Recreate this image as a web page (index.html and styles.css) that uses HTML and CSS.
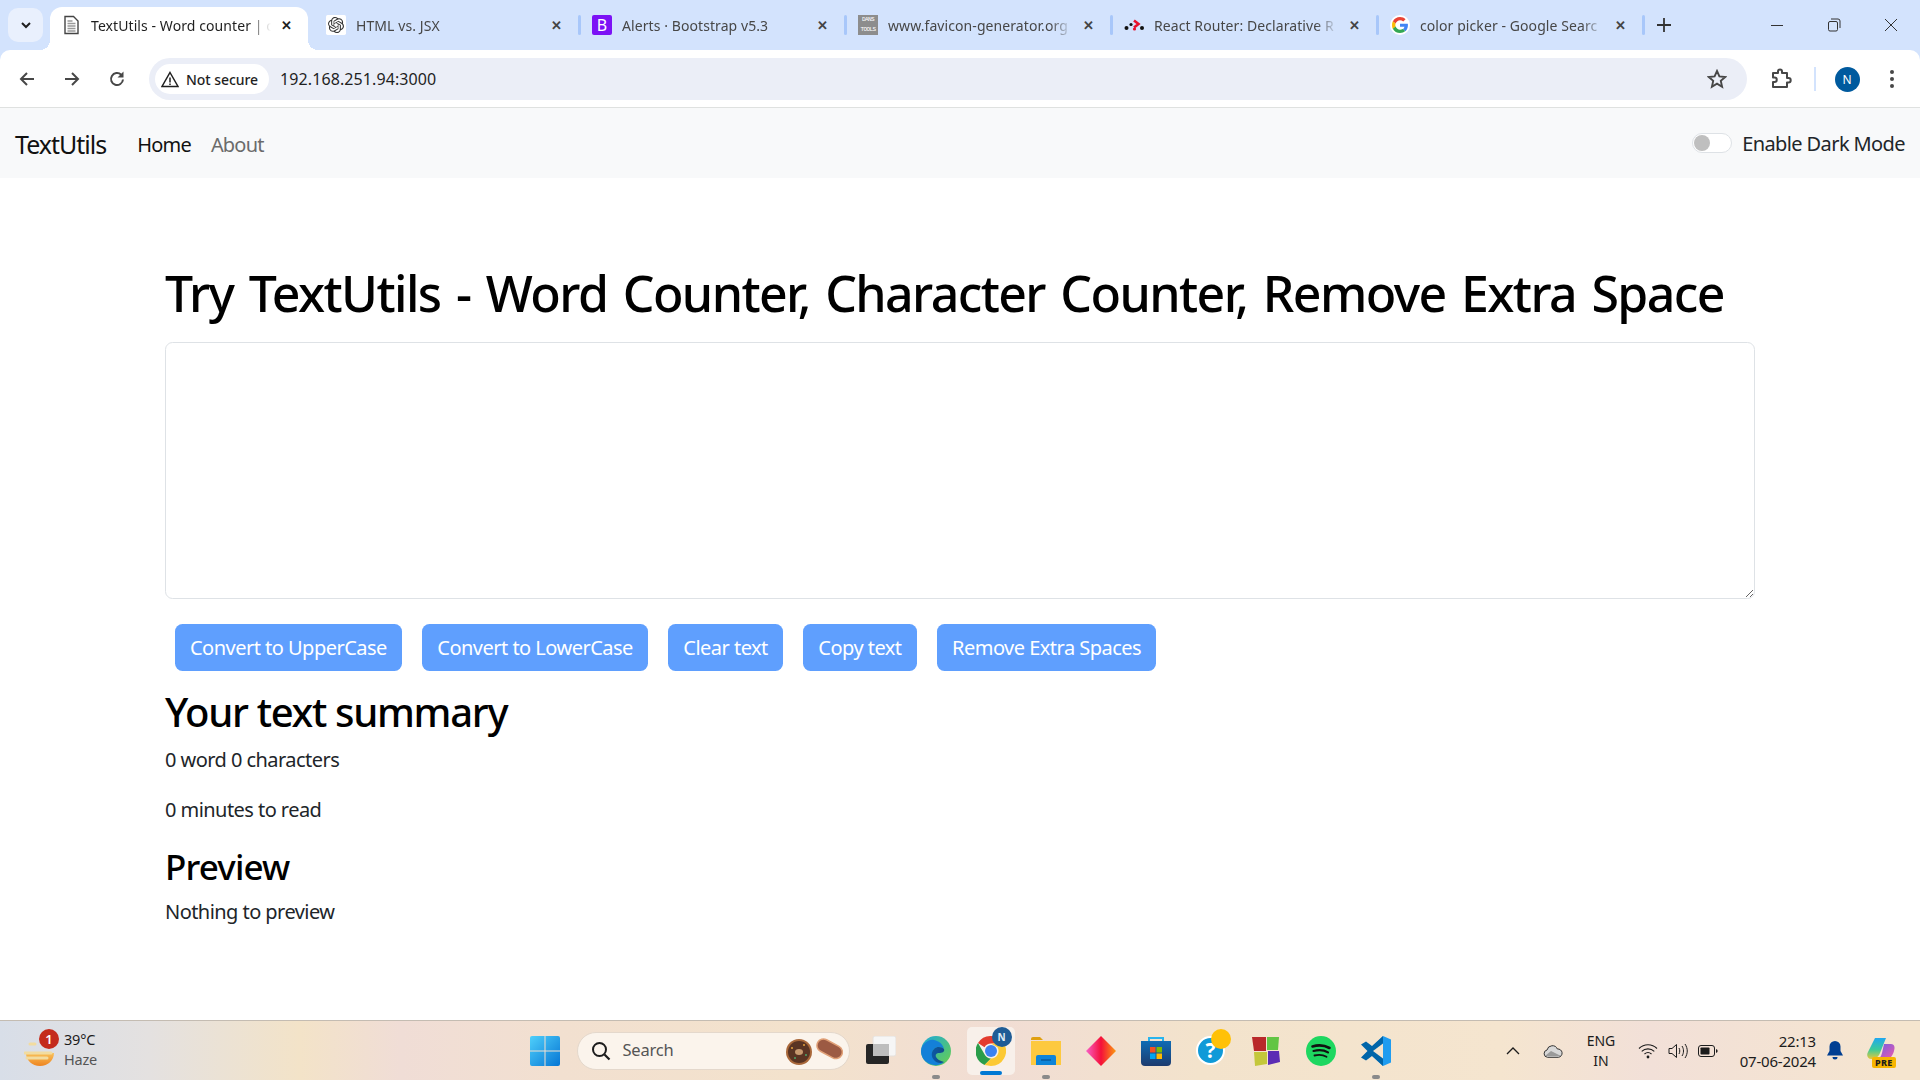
FILE: index.html
```html
<!DOCTYPE html>
<html lang="en">
<head>
<meta charset="utf-8">
<title>TextUtils</title>
<link rel="stylesheet" href="styles.css">
</head>
<body>
<header class="browser">
  <div class="tabstrip">
    <button class="tabsearch"><svg width="14" height="14" viewBox="0 0 14 14"><path d="M3 5l4 4 4-4" fill="none" stroke="#1f1f1f" stroke-width="2"/></svg></button>
    <div class="tab active">
      <svg class="fav" width="20" height="20" viewBox="0 0 20 20"><path d="M4 1.500h8.500L17 6v12.500H4z" fill="#fff" stroke="#444" stroke-width="1.400"/><path d="M6.500 6h5M6.500 8.500h8M6.500 11h8M6.500 13.500h8M6.500 16h8" stroke="#999" stroke-width="1.400"/></svg>
      <span class="tabtitle">TextUtils - Word counter | c</span>
      <span class="tabx">✕</span>
    </div>
    <div class="tab">
      <svg class="fav" width="20" height="20" viewBox="0 0 24 24"><rect width="24" height="24" rx="2" fill="#fff"/><path transform="translate(2.400 2.400) scale(.8)" fill="#333" d="M22.2819 9.8211a5.9847 5.9847 0 0 0-.5157-4.9108 6.0462 6.0462 0 0 0-6.5098-2.9A6.0651 6.0651 0 0 0 4.9807 4.1818a5.9847 5.9847 0 0 0-3.9977 2.9 6.0462 6.0462 0 0 0 .7427 7.0966 5.98 5.98 0 0 0 .511 4.9107 6.051 6.051 0 0 0 6.5146 2.9001A5.9847 5.9847 0 0 0 13.2599 24a6.0557 6.0557 0 0 0 5.7718-4.2058 5.9894 5.9894 0 0 0 3.9977-2.9001 6.0557 6.0557 0 0 0-.7475-7.0729zm-9.022 12.6081a4.4755 4.4755 0 0 1-2.8764-1.0408l.1419-.0804 4.7783-2.7582a.7948.7948 0 0 0 .3927-.6813v-6.7369l2.02 1.1686a.071.071 0 0 1 .038.052v5.5826a4.504 4.504 0 0 1-4.4945 4.4944zm-9.6607-4.1254a4.4708 4.4708 0 0 1-.5346-3.0137l.142.0852 4.783 2.7582a.7712.7712 0 0 0 .7806 0l5.8428-3.3685v2.3324a.0804.0804 0 0 1-.0332.0615L9.74 19.9502a4.4992 4.4992 0 0 1-6.1408-1.6464zM2.3408 7.8956a4.485 4.485 0 0 1 2.3655-1.9728V11.6a.7664.7664 0 0 0 .3879.6765l5.8144 3.3543-2.0201 1.1685a.0757.0757 0 0 1-.071 0l-4.8303-2.7865A4.504 4.504 0 0 1 2.3408 7.872zm16.5963 3.8558L13.1038 8.364 15.1192 7.2a.0757.0757 0 0 1 .071 0l4.8303 2.7913a4.4944 4.4944 0 0 1-.6765 8.1042v-5.6772a.79.79 0 0 0-.407-.667zm2.0107-3.0231l-.142-.0852-4.7735-2.7818a.7759.7759 0 0 0-.7854 0L9.409 9.2297V6.8974a.0662.0662 0 0 1 .0284-.0615l4.8303-2.7866a4.4992 4.4992 0 0 1 6.6802 4.66zM8.3065 12.863l-2.02-1.1638a.0804.0804 0 0 1-.038-.0567V6.0742a4.4992 4.4992 0 0 1 7.3757-3.4537l-.142.0805L8.704 5.459a.7948.7948 0 0 0-.3927.6813zm1.0976-2.3654l2.602-1.4998 2.6069 1.4998v2.9994l-2.5974 1.4997-2.6067-1.4997Z"/></svg>
      <span class="tabtitle">HTML vs. JSX</span>
      <span class="tabx">✕</span>
    </div>
    <div class="tab sep">
      <span class="fav bs">B</span>
      <span class="tabtitle">Alerts · Bootstrap v5.3</span>
      <span class="tabx">✕</span>
    </div>
    <div class="tab sep">
      <span class="fav dans"><span>DANS</span><span>TOOLS</span></span>
      <span class="tabtitle">www.favicon-generator.org</span>
      <span class="tabx">✕</span>
    </div>
    <div class="tab sep">
      <svg class="fav" width="20" height="20" viewBox="0 0 20 20"><circle cx="2.500" cy="13" r="2" fill="#111"/><circle cx="7" cy="9.500" r="1.600" fill="#111"/><circle cx="18" cy="13" r="2" fill="#111"/><path d="M10 5.500l4.500 3.500-4.500 3.500" fill="none" stroke="#e8112d" stroke-width="2.600"/><circle cx="10.500" cy="14" r="1.600" fill="#e8112d"/></svg>
      <span class="tabtitle">React Router: Declarative R</span>
      <span class="tabx">✕</span>
    </div>
    <div class="tab sep">
      <svg class="fav" width="20" height="20" viewBox="0 0 48 48"><circle cx="24" cy="24" r="24" fill="#fff"/><path fill="#EA4335" d="M24 12.600c3 0 5.600 1 7.700 3l5.700-5.700C33.900 6.700 29.400 4.800 24 4.800c-7.500 0-14 4.300-17.200 10.600l6.700 5.200c1.600-4.700 6-8 10.500-8z"/><path fill="#4285F4" d="M43 24.500c0-1.300-.1-2.600-.3-3.800H24v7.300h10.700c-.5 2.500-1.900 4.500-4 5.900l6.500 5C41 35.300 43 30.300 43 24.500z"/><path fill="#FBBC05" d="M13.500 28.400c-.4-1.200-.7-2.600-.7-4s.2-2.700.7-4l-6.700-5.200C5.500 18 4.800 21.100 4.800 24.400s.7 6.400 2 9.100z"/><path fill="#34A853" d="M24 43.200c5.200 0 9.600-1.700 12.800-4.600l-6.500-5c-1.700 1.200-3.900 1.900-6.300 1.900-4.500 0-8.900-3.300-10.500-7.800l-6.700 5.200C10 39.200 16.500 43.200 24 43.200z"/></svg>
      <span class="tabtitle">color picker - Google Searc</span>
      <span class="tabx">✕</span>
    </div>
    <span class="lastsep"></span>
    <svg class="newtab" width="14" height="14" viewBox="0 0 14 14"><path d="M7 0v14M0 7h14" stroke="#333" stroke-width="1.800"/></svg>
    <div class="winctl">
      <svg width="14" height="14" viewBox="0 0 14 14"><path d="M1 7.500h12" stroke="#333"/></svg>
      <svg width="14" height="14" viewBox="0 0 14 14"><rect x="1.500" y="3.500" width="9" height="9.500" rx="1.500" fill="none" stroke="#333"/><path d="M4 1h7a2 2 0 0 1 2 2v7" fill="none" stroke="#333"/></svg>
      <svg width="14" height="14" viewBox="0 0 14 14"><path d="M1 1l12 12M13 1L1 13" stroke="#333"/></svg>
    </div>
  </div>
  <div class="toolbar">
    <svg class="tbtn" width="18" height="18" viewBox="0 0 18 18"><path d="M16 9H3M9 3L3 9l6 6" fill="none" stroke="#474747" stroke-width="2"/></svg>
    <svg class="tbtn" width="18" height="18" viewBox="0 0 18 18"><path d="M2 9h13M9 3l6 6-6 6" fill="none" stroke="#474747" stroke-width="2"/></svg>
    <svg class="tbtn" width="18" height="18" viewBox="0 0 18 18"><path d="M15 9.500A6 6 0 1 1 13.200 4.700" fill="none" stroke="#474747" stroke-width="2"/><path d="M15.500 1.500v6h-6z" fill="#474747"/></svg>
    <div class="omnibox">
      <div class="chip">
        <svg width="18" height="17" viewBox="0 0 18 17"><path d="M9 1.500L17 15.500H1z" fill="none" stroke="#1f1f1f" stroke-width="1.500"/><path d="M9 6.500v5M9 12.500v1.500" stroke="#1f1f1f" stroke-width="1.500"/></svg>
        <span>Not secure</span>
      </div>
      <span class="url">192.168.251.94:3000</span>
      <svg class="star" width="20" height="20" viewBox="0 0 20 20"><path d="M10 2l2.400 5.400 5.800.6-4.400 3.900 1.300 5.800L10 14.700 4.900 17.700l1.300-5.800L1.800 8l5.800-.6z" fill="none" stroke="#474747" stroke-width="1.900"/></svg>
    </div>
    <svg class="ext" width="22" height="22" viewBox="0 0 22 22"><path d="M3 5h5V3.500a2 2 0 0 1 4 0V5h5v5h1.500a2.200 2.200 0 0 1 0 4.400H17V19H3v-5h1.500a2.200 2.200 0 0 0 0-4.500H3z" fill="none" stroke="#474747" stroke-width="2" stroke-linejoin="round"/></svg>
    <span class="tbdiv"></span>
    <span class="avatar">N</span>
    <svg class="dots" width="6" height="20" viewBox="0 0 6 20"><circle cx="3" cy="3" r="2" fill="#474747"/><circle cx="3" cy="10" r="2" fill="#474747"/><circle cx="3" cy="17" r="2" fill="#474747"/></svg>
  </div>
</header>

<nav class="navbar">
  <a class="brand">TextUtils</a>
  <a class="navlink current">Home</a>
  <a class="navlink">About</a>
  <div class="darkswitch">
    <span class="switch"><span class="knob"></span></span>
    <span>Enable Dark Mode</span>
  </div>
</nav>

<main class="page">
  <h1>Try TextUtils - Word Counter, Character Counter, Remove Extra Space</h1>
  <textarea class="box" rows="8" aria-label="Text"></textarea>
  <div class="actions">
    <button class="btn">Convert to UpperCase</button>
    <button class="btn">Convert to LowerCase</button>
    <button class="btn">Clear text</button>
    <button class="btn">Copy text</button>
    <button class="btn">Remove Extra Spaces</button>
  </div>
  <h2>Your text summary</h2>
  <p>0 word 0 characters</p>
  <p class="gap">0 minutes to read</p>
  <h3>Preview</h3>
  <p>Nothing to preview</p>
</main>

<footer class="taskbar">
  <div class="weather">
    <span class="wicon">
      <svg width="32" height="26" viewBox="0 0 32 26"><defs><linearGradient id="sun" x1="0" y1="0" x2="0" y2="1"><stop offset="0" stop-color="#f9c25a"/><stop offset="1" stop-color="#ee8420"/></linearGradient></defs><path d="M2 12h28c0 7-6 13-14 13S2 19 2 12z" fill="url(#sun)"/><path d="M6 3h5M1 12h26M3 17h20" stroke="#f2dca0" stroke-width="3" stroke-linecap="round"/></svg>
      <span class="wbadge">1</span>
    </span>
    <span class="wtext"><span class="temp">39°C</span><span class="cond">Haze</span></span>
  </div>
  <span class="slot">
    <svg width="30" height="30" viewBox="0 0 30 30"><defs><linearGradient id="win" x1="0" y1="0" x2="1" y2="1"><stop offset="0" stop-color="#4fd0fb"/><stop offset="1" stop-color="#0676d4"/></linearGradient></defs><path d="M0 2a2 2 0 0 1 2-2h12.500v14.500H0zM15.500 0H28a2 2 0 0 1 2 2v12.500H15.500zM0 15.500h14.500V30H2a2 2 0 0 1-2-2zM15.500 15.500H30V28a2 2 0 0 1-2 2H15.500z" fill="url(#win)"/></svg>
  </span>
  <div class="search">
    <svg width="20" height="20" viewBox="0 0 20 20"><circle cx="8.500" cy="8.500" r="6.500" fill="none" stroke="#1c1c1c" stroke-width="2"/><path d="M13.500 13.500l5 5" stroke="#1c1c1c" stroke-width="2.200"/></svg>
    <span class="searchlabel">Search</span>
    <svg class="snack" width="58" height="30" viewBox="0 0 58 30"><circle cx="14" cy="16" r="13" fill="#a9683a"/><circle cx="14" cy="16" r="11" fill="#5a3423"/><ellipse cx="14" cy="16" rx="4" ry="3" fill="#c89a70"/><g fill="#e5a03c"><circle cx="7" cy="12" r="1"/><circle cx="19" cy="9" r="1"/></g><g fill="#4aa56a"><circle cx="10" cy="22" r="1"/><circle cx="21" cy="19" r="1"/></g><rect x="31" y="6" width="27" height="13" rx="6.500" transform="rotate(28 44 13)" fill="#9c5a43" stroke="#e0a077" stroke-width="1.500"/></svg>
  </div>
  <span class="slot">
    <svg width="30" height="30" viewBox="0 0 30 30"><rect x="7" y="0" width="23" height="20" rx="2" fill="#f6f6f6" stroke="#e4e0dc"/><rect x="0" y="8" width="23" height="20" rx="2" fill="#262626"/><rect x="7" y="8" width="16" height="12" fill="#bdbdbd"/></svg>
  </span>
  <span class="slot pinned">
    <svg width="30" height="30" viewBox="0 0 30 30"><defs><linearGradient id="edge" x1="0" y1="0" x2="1" y2="0"><stop offset="0" stop-color="#0c59a4"/><stop offset="1" stop-color="#114a8b"/></linearGradient><linearGradient id="edge2" x1="0" y1="0" x2="1" y2="1"><stop offset="0" stop-color="#1ba8dc"/><stop offset="1" stop-color="#6ad04a"/></linearGradient></defs><circle cx="15" cy="15" r="15" fill="url(#edge2)"/><path d="M0 15C1 7 8 3 13 4c5 1 9 4 10 9-2-2-7-3-10 0-3 3-2 8 1 11 2 2 6 3 9 2-4 4-11 4-16 1C3 25 0 20 0 15z" fill="#1480d8"/><path d="M13 13c3-3 8-2 10 0 1 3-2 4-5 4-2 0-4 1-3 4 1 2 4 4 8 5-3 2-8 1-10-2-3-3-3-8 0-11z" fill="url(#edge)"/></svg>
  </span>
  <span class="slot focused">
    <svg width="30" height="30" viewBox="0 0 30 30"><path d="M15 0a15 15 0 0 1 13 7.500H15a7.500 7.500 0 0 0-6.500 3.750L2 7A15 15 0 0 1 15 0z" fill="#e33b2e"/><path d="M2 7l6.500 11.250A7.500 7.500 0 0 0 15 22.500L8.500 29A15 15 0 0 1 2 7z" fill="#2a9d4a"/><path d="M28 7.500A15 15 0 0 1 15 30l-6.500-1L15 22.500a7.500 7.500 0 0 0 6.500-11.250L15 7.500z" fill="#fcc934"/><circle cx="15" cy="15" r="6" fill="#3b82f0"/></svg>
    <span class="nbadge">N</span>
  </span>
  <span class="slot pinned">
    <svg width="30" height="28" viewBox="0 0 30 28"><path d="M0 2a2 2 0 0 1 2-2h7l3 3h-12z" fill="#e0a010"/><path d="M0 4h30v24H0z" fill="#fdc93f"/><path d="M5 20a2 2 0 0 1 2-2h16a2 2 0 0 1 2 2v8H5z" fill="#0d84d8"/><path d="M10 23h10" stroke="#075a9e" stroke-width="1.500"/></svg>
  </span>
  <span class="slot">
    <svg width="30" height="30" viewBox="0 0 30 30"><defs><linearGradient id="dia" x1="0" y1="0" x2="1" y2="0"><stop offset="0" stop-color="#f860c8"/><stop offset=".5" stop-color="#f5103a"/><stop offset="1" stop-color="#fb9a10"/></linearGradient></defs><path d="M15 0l15 15-15 15L0 15z" fill="url(#dia)"/></svg>
  </span>
  <span class="slot">
    <svg width="30" height="30" viewBox="0 0 30 30"><defs><linearGradient id="bag" x1="0" y1="0" x2="0" y2="1"><stop offset="0" stop-color="#0f6cb5"/><stop offset="1" stop-color="#1d3b6e"/></linearGradient></defs><path d="M8 5V2h14v3" fill="none" stroke="#28b4ee" stroke-width="2"/><path d="M0 5h30v21a4 4 0 0 1-4 4H4a4 4 0 0 1-4-4z" fill="url(#bag)"/><rect x="9" y="11" width="5.500" height="5.500" fill="#f25022"/><rect x="15.500" y="11" width="5.500" height="5.500" fill="#7fba00"/><rect x="9" y="17.500" width="5.500" height="5.500" fill="#00a4ef"/><rect x="15.500" y="17.500" width="5.500" height="5.500" fill="#ffb900"/></svg>
  </span>
  <span class="slot help">
    <span class="helpq">?</span>
    <span class="helpdot"></span>
  </span>
  <span class="slot">
    <svg width="30" height="30" viewBox="0 0 30 30"><path d="M1 1h14v14H3z" fill="#b9282a"/><path d="M16 1h12l-1 13H16z" fill="#62c544"/><path d="M3 16h13v12l-12 2z" fill="#c4c73b"/><path d="M17 15h11l1 11-12 3z" fill="#5c2cb4"/></svg>
  </span>
  <span class="slot">
    <svg width="30" height="30" viewBox="0 0 30 30"><circle cx="15" cy="15" r="15" fill="#1ed760"/><g fill="none" stroke="#111" stroke-linecap="round"><path d="M6.500 10.500c6-1.800 12-1.200 17 1.500" stroke-width="2.600"/><path d="M7.500 15c5-1.400 10.500-1 14.500 1.400" stroke-width="2.200"/><path d="M8.500 19.500c4.500-1 8.500-.7 12 1.200" stroke-width="1.800"/></g></svg>
  </span>
  <span class="slot pinned">
    <svg width="30" height="30" viewBox="0 0 30 30"><path d="M22 0l8 3.500v23L22 30 7 16z" fill="#1f9cf0"/><path d="M22 0v30L11 20l-6 4.500-5-3 6.500-6.500L0 8.500l5-3 6 4.500z" fill="#0065a9"/><path d="M22 7.500L12 15l10 7.500z" fill="#f4e4ce"/></svg>
  </span>
  <div class="tray">
    <span class="tslot chev"><svg width="14" height="8" viewBox="0 0 14 8"><path d="M1 7l6-6 6 6" fill="none" stroke="#1c1c1c" stroke-width="1.300"/></svg></span>
    <span class="tslot cloud"><svg width="20" height="14" viewBox="0 0 20 14"><path d="M4.500 13.300a3.700 3.700 0 0 1-.5-7.300 5.500 5.500 0 0 1 10.400-1 4 4 0 0 1 1 8.300z" fill="#d8d8d8" stroke="#333"/><path d="M2 12l6-5 10 5z" fill="#9a9a9a"/></svg></span>
    <span class="lang"><span>ENG</span><span>IN</span></span>
    <span class="tslot icn"><svg width="20" height="16" viewBox="0 0 20 16"><g fill="none" stroke="#1c1c1c" stroke-width="1.100"><path d="M1 5.500c5-5 13-5 18 0"/><path d="M3.700 8.300c3.500-3.300 9-3.300 12.600 0"/><path d="M6.500 11c2-1.700 5-1.700 7 0"/></g><circle cx="10" cy="14" r="1.400" fill="#1c1c1c"/></svg></span>
    <span class="tslot icn"><svg width="20" height="16" viewBox="0 0 20 16"><path d="M1 5.500h3L8.500 1.500v13L4 10.500H1z" fill="none" stroke="#1c1c1c"/><g fill="none" stroke="#1c1c1c"><path d="M11 5c1 1.800 1 4.200 0 6"/><path d="M14 3c2 3 2 7 0 10"/><path d="M17 1c3 4.500 3 9.500 0 14"/></g></svg></span>
    <span class="tslot icn"><svg width="20" height="12" viewBox="0 0 20 12"><rect x=".5" y=".5" width="16" height="11" rx="2.500" fill="none" stroke="#1c1c1c"/><rect x="2.500" y="2.500" width="9" height="7" rx=".8" fill="#1c1c1c"/><path d="M18 4v4l1.500-1V5z" fill="#1c1c1c"/></svg></span>
    <span class="clock"><span>22:13</span><span>07-06-2024</span></span>
    <span class="tslot bell"><svg width="16" height="19" viewBox="0 0 16 19"><path d="M8 0a5.500 5.500 0 0 1 5.500 5.500V10l2.500 4.500H0L2.500 10V5.500A5.500 5.500 0 0 1 8 0z" fill="#003e92"/><path d="M5.500 16h5a2.500 2.500 0 0 1-5 0z" fill="#003e92"/></svg></span>
    <span class="tslot copilot">
      <svg width="28" height="26" viewBox="0 0 28 26"><defs><linearGradient id="cop1" x1="0" y1="0" x2="0" y2="1"><stop offset="0" stop-color="#1fa8f0"/><stop offset=".55" stop-color="#3ccb9a"/><stop offset="1" stop-color="#e8c83a"/></linearGradient><linearGradient id="cop2" x1="0" y1="0" x2="1" y2="1"><stop offset="0" stop-color="#6a5ee8"/><stop offset="1" stop-color="#f45aa8"/></linearGradient></defs><path d="M8 0h11l-6 15c-2 5-5 6-9 6-3 0-5-3-3-7z" fill="url(#cop1)"/><path d="M17 6h7c4 0 4 4 3 7-1 4-4 9-9 9H9c3-1 5-3 6-7z" fill="url(#cop2)"/></svg>
      <span class="pre">PRE</span>
    </span>
  </div>
</footer>
</body>
</html>
```
FILE: styles.css
```css
* { box-sizing: border-box; }
html, body { margin: 0; height: 100%; }
body {
  height: 100vh;
  overflow: hidden;
  display: flex;
  flex-direction: column;
  font-family: "Noto Sans", "Open Sans", sans-serif;
  color: #111;
  background: #fff;
}

/* browser chrome */
.browser { flex: none; height: 108px; background: #d3e3fd; }
.tabstrip { height: 50px; display: flex; align-items: flex-start; padding-left: 8px; position: relative; }
.tabsearch { width: 35px; height: 34px; margin-top: 8px; margin-right: 7px; border: 0; border-radius: 10px; background: #e9f0fd; display: flex; align-items: center; justify-content: center; padding: 0; }
.tab { width: 266px; height: 43px; margin-top: 7px; padding: 0 19px 7px 9px; display: flex; align-items: center; position: relative; font-size: 14px; letter-spacing: .08px; color: #474747; flex: none; }
.tab.active { background: #fff; border-radius: 12px 12px 0 0; color: #1f1f1f; width: 258px; padding-left: 11px; padding-right: 13.500px; margin-right: 9px; }
.tab.active::before, .tab.active::after { content: ""; position: absolute; bottom: 0; width: 10px; height: 10px; background: radial-gradient(circle at 0 0, transparent 10px, #fff 10px); }
.tab.active::before { left: -10px; }
.tab.active::after { right: -10px; background: radial-gradient(circle at 100% 0, transparent 10px, #fff 10px); }
.tab.sep::before, .lastsep { content: ""; width: 2.500px; height: 20px; background: #a8c7fa; border-radius: 2px; }
.tab.sep::before { position: absolute; left: -5px; top: 8px; }
.lastsep { margin: 15px 0 0 -5px; flex: none; }
.fav { flex: none; width: 20px; height: 20px; margin-right: 10px; }
.tabtitle { flex: 1; min-width: 0; white-space: nowrap; overflow: hidden; -webkit-mask-image: linear-gradient(90deg, #000 calc(100% - 22px), transparent); mask-image: linear-gradient(90deg, #000 calc(100% - 22px), transparent); }
.tabx { flex: none; width: 16px; margin-left: 8px; font-size: 13px; font-weight: 700; color: #444; text-align: center; letter-spacing: 0; }
.active .tabx { color: #1f1f1f; }
.bs { background: #7c12f5; color: #fff; border-radius: 2px; display: flex; align-items: center; justify-content: center; font-size: 16px; letter-spacing: 0; }
.dans { display: flex; flex-direction: column; background: #8d8d8d; color: #fff; font: 6px/10px "Liberation Mono", monospace; text-align: center; letter-spacing: -.6px; overflow: hidden; }
.newtab { margin: 18px 0 0 12px; flex: none; }
.winctl { margin-left: auto; display: flex; padding-right: 22px; padding-top: 18px; gap: 43px; }
.toolbar { height: 58px; background: #fff; border-radius: 10px 10px 0 0; border-bottom: 1px solid #dfe1e0; display: flex; align-items: center; padding: 1px 25.500px 0 18px; }
.tbtn { flex: none; margin-right: 27px; }
.omnibox { flex: 1; margin: 0 0 0 -4px; height: 42px; border-radius: 21px; background: #ebeef7; display: flex; align-items: center; padding: 0 20px 0 6px; }
.chip { height: 30px; width: 114px; background: #fff; border-radius: 15px; display: flex; align-items: center; padding-left: 6px; gap: 7px; font-size: 14px; font-weight: 500; letter-spacing: -.05px; color: #1f1f1f; white-space: nowrap; }
.url { margin-left: 11px; font-size: 16px; letter-spacing: .1px; color: #1f1f1f; flex: 1; }
.star { flex: none; }
.ext { flex: none; margin-left: 23px; }
.tbdiv { width: 2px; height: 24px; background: #d3e3fd; margin-left: 22px; flex: none; }
.avatar { width: 25px; height: 25px; border-radius: 50%; background: #005a9e; color: #fff; font-size: 12px; display: flex; align-items: center; justify-content: center; margin-left: 18.500px; flex: none; }
.dots { margin-left: 29px; flex: none; }

/* navbar */
.navbar { flex: none; height: 70px; background: #f8f9fa; display: flex; align-items: center; padding: 2px 15px 0; font-size: 20px; }
.brand { font-size: 25px; letter-spacing: -1px; color: #111; margin-right: 31px; }
.navlink { color: #6b6b6b; margin-right: 20px; letter-spacing: -.8px; }
.navlink.current { color: #111; }
.darkswitch { margin-left: auto; display: flex; align-items: center; gap: 10px; letter-spacing: -.6px; color: #212529; margin-top: -2px; }
.switch { width: 40px; height: 20px; border: 1px solid #dee2e6; border-radius: 10px; background: #fff; padding: 1px; display: block; }
.knob { display: block; width: 16px; height: 16px; border-radius: 50%; background: #bfbfbf; }

/* page */
.page { flex: 1; padding: 85px 165px 0; min-height: 0; }
h1, h2, h3, p { margin: 0; }
h1 { font-size: 50px; line-height: 60px; font-weight: 500; letter-spacing: -1.580px; word-spacing: 4px; white-space: nowrap; color: #000; }
.box { display: block; width: 100%; height: 257px; margin-top: 19px; border: 1px solid #dee2e6; border-radius: 7.500px; background: #fff; resize: vertical; }
.actions { display: flex; gap: 20.500px; margin: 25px 0 0 10px; }
.btn { height: 47px; padding: 0 15px; border: 0; border-radius: 7.500px; background: #5f9ffe; color: #fff; font-family: inherit; font-size: 20px; letter-spacing: -.52px; white-space: nowrap; }
h2 { font-size: 40px; line-height: 48px; font-weight: 500; margin-top: 17px; letter-spacing: -1.300px; color: #000; }
h3 { font-size: 35px; line-height: 42px; font-weight: 500; margin-top: 21px; letter-spacing: -.850px; color: #000; }
p { font-size: 20px; line-height: 30px; letter-spacing: -.55px; color: #212529; margin-top: 9px; }
.gap { margin-top: 20px; }
h3 + p { margin-top: 9px; }

/* taskbar */
.taskbar { flex: none; height: 60px; border-top: 1px solid #c4bcb2; display: flex; align-items: center; background: linear-gradient(90deg, #d8dee8 0, #e4e1e0 150px, #f3e3c8 300px, #f0ddd6 400px, #f2e0d0 560px, #f3e2cc 800px, #f1ddd4 1000px, #f3e3cc 1200px, #f5e5cf 1500px, #f2e0d8 1650px, #f5e5cf 1900px); }
.weather { width: 517.500px; flex: none; display: flex; align-items: center; padding-left: 24px; }
.wicon { position: relative; width: 32px; height: 26px; margin-top: 6px; }
.wbadge { position: absolute; left: 15px; top: -12px; width: 20px; height: 20px; border-radius: 50%; background: #c42b1c; color: #fff; font-size: 13px; font-weight: 600; display: flex; align-items: center; justify-content: center; }
.wtext { display: flex; flex-direction: column; margin-left: 8px; margin-top: -3px; font-size: 14.500px; line-height: 20px; letter-spacing: -.2px; }
.temp { color: #1c1c1c; }
.cond { color: #555; }
.slot { flex: none; width: 55px; height: 48px; display: flex; align-items: center; justify-content: center; position: relative; }
.search { flex: none; width: 273px; height: 38px; margin: 0 3.500px 0 4px; border-radius: 19px; border: 1px solid #e4d8cc; background: #fbf4ec; display: flex; align-items: center; padding-left: 13px; position: relative; }
.searchlabel { margin-left: 12px; font-size: 16.500px; color: #555; letter-spacing: -.2px; margin-top: -2px; }
.snack { margin-left: auto; margin-right: 6px; }
.pinned::after { content: ""; position: absolute; bottom: -4px; left: 50%; width: 8px; height: 4px; margin-left: -4px; border-radius: 2px; background: #8a8a8a; }
.focused { background: #f8f0ea; border-radius: 5px; width: 48px; margin: 0 3.500px; }
.focused::after { content: ""; position: absolute; bottom: 0; left: 50%; width: 22px; height: 4px; margin-left: -11px; border-radius: 2px; background: #0078d4; }
.nbadge { position: absolute; right: 3px; top: 0; width: 20px; height: 20px; border-radius: 50%; background: #1f5c96; color: #dfeaf5; font-size: 10px; font-weight: 700; display: flex; align-items: center; justify-content: center; }
.helpq { width: 29px; height: 29px; border-radius: 50%; background: #0f9ad8; border: 2px solid #fff; color: #fff; font-size: 21px; font-weight: 700; display: flex; align-items: center; justify-content: center; line-height: 1; }
.helpdot { position: absolute; left: 28px; top: 2px; width: 20px; height: 20px; border-radius: 50%; background: #ffc107; }
.tray { margin-left: auto; margin-right: 12px; display: flex; align-items: center; color: #1c1c1c; }
.tslot { flex: none; display: flex; align-items: center; justify-content: center; position: relative; }
.chev { width: 40px; }
.cloud { width: 40px; }
.icn { width: 30px; }
.lang { width: 56px; margin-right: 4px; display: flex; flex-direction: column; align-items: center; font-size: 14px; line-height: 20px; }
.clock { width: 93px; display: flex; flex-direction: column; align-items: flex-end; font-size: 15px; line-height: 20px; letter-spacing: -.2px; white-space: nowrap; }
.bell { width: 38px; }
.copilot { width: 54px; height: 34px; }
.pre { position: absolute; left: 18px; bottom: 0; height: 11px; padding: 0 3px; background: #f7b500; border-radius: 2px; color: #1c1c1c; font-size: 9px; line-height: 11px; font-weight: 800; letter-spacing: .3px; }
```
